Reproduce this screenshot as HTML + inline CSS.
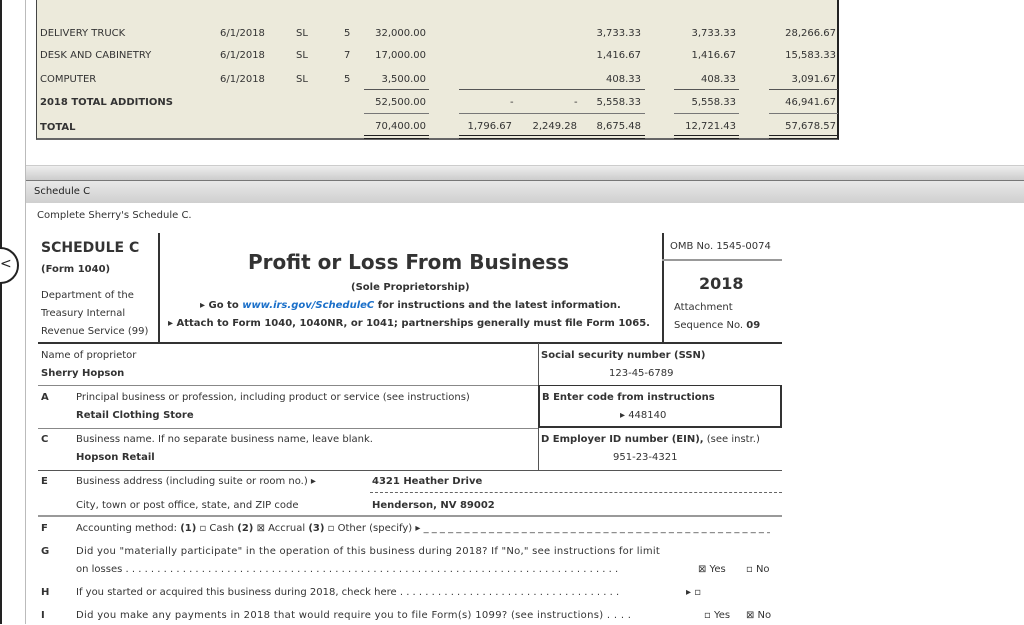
<!DOCTYPE html>
<html><head><meta charset="utf-8"><style>
*{margin:0;padding:0;box-sizing:border-box}
body{width:1024px;height:624px;overflow:hidden;background:#fff;position:relative;font-family:"DejaVu Sans",Verdana,sans-serif;color:#333;font-size:10px}
.a{position:absolute;white-space:nowrap}
.r{text-align:right}
.b{font-weight:bold}
.hl{position:absolute;background:#333;height:1px}
.vl{position:absolute;background:#333;width:1px}
.c{overflow:hidden}
</style></head><body>
<div class="a" style="left:0;top:0;width:2px;height:624px;background:#222"></div>
<div class="a" style="left:25px;top:0;width:1px;height:624px;background:#bbb"></div>
<div class="a" style="left:36px;top:0;width:803px;height:140px;background:#ECEADB;border:1px solid #444;border-top:none;border-right:2px solid #222;border-bottom:2px solid #666"></div>
<div style="position:absolute;left:0;top:2px;width:1024px;height:140px">
<div class="a" style="left:40px;top:26px">DELIVERY TRUCK</div>
<div class="a" style="left:40px;top:48px">DESK AND CABINETRY</div>
<div class="a" style="left:40px;top:72px">COMPUTER</div>
<div class="a b" style="left:40px;top:95px">2018 TOTAL ADDITIONS</div>
<div class="a b" style="left:40px;top:120px">TOTAL</div>
<div class="a" style="left:220px;top:26px">6/1/2018</div><div class="a" style="left:296px;top:26px">SL</div><div class="a" style="left:344px;top:26px">5</div>
<div class="a" style="left:220px;top:48px">6/1/2018</div><div class="a" style="left:296px;top:48px">SL</div><div class="a" style="left:344px;top:48px">7</div>
<div class="a" style="left:220px;top:72px">6/1/2018</div><div class="a" style="left:296px;top:72px">SL</div><div class="a" style="left:344px;top:72px">5</div>
<div class="a r" style="left:340px;width:86px;top:26px">32,000.00</div>
<div class="a r" style="left:340px;width:86px;top:48px">17,000.00</div>
<div class="a r" style="left:340px;width:86px;top:72px">3,500.00</div>
<div class="a r" style="left:340px;width:86px;top:95px">52,500.00</div>
<div class="a r" style="left:340px;width:86px;top:119px">70,400.00</div>
<div class="a r" style="left:440px;width:72px;top:119px">1,796.67</div>
<div class="a" style="left:510px;top:95px">-</div>
<div class="a" style="left:574px;top:95px">-</div>
<div class="a r" style="left:500px;width:77px;top:119px">2,249.28</div>
<div class="a r" style="left:560px;width:81px;top:26px">3,733.33</div>
<div class="a r" style="left:560px;width:81px;top:48px">1,416.67</div>
<div class="a r" style="left:560px;width:81px;top:72px">408.33</div>
<div class="a r" style="left:560px;width:81px;top:95px">5,558.33</div>
<div class="a r" style="left:560px;width:81px;top:119px">8,675.48</div>
<div class="a r" style="left:650px;width:86px;top:26px">3,733.33</div>
<div class="a r" style="left:650px;width:86px;top:48px">1,416.67</div>
<div class="a r" style="left:650px;width:86px;top:72px">408.33</div>
<div class="a r" style="left:650px;width:86px;top:95px">5,558.33</div>
<div class="a r" style="left:650px;width:86px;top:119px">12,721.43</div>
<div class="a r" style="left:740px;width:96px;top:26px">28,266.67</div>
<div class="a r" style="left:740px;width:96px;top:48px">15,583.33</div>
<div class="a r" style="left:740px;width:96px;top:72px">3,091.67</div>
<div class="a r" style="left:740px;width:96px;top:95px">46,941.67</div>
<div class="a r" style="left:740px;width:96px;top:119px">57,678.57</div>
</div>
<div class="hl" style="left:364px;width:65px;top:89px;background:#555"></div>
<div class="hl" style="left:459px;width:186px;top:89px;background:#555"></div>
<div class="hl" style="left:674px;width:65px;top:89px;background:#555"></div>
<div class="hl" style="left:769px;width:69px;top:89px;background:#555"></div>
<div class="hl" style="left:364px;width:65px;top:113px;background:#777"></div>
<div class="hl" style="left:459px;width:186px;top:113px;background:#777"></div>
<div class="hl" style="left:674px;width:65px;top:113px;background:#777"></div>
<div class="hl" style="left:769px;width:69px;top:113px;background:#777"></div>
<div class="a" style="left:364px;width:65px;top:135px;height:4px;border-top:1px solid #222;border-bottom:1px solid #222"></div>
<div class="a" style="left:459px;width:186px;top:135px;height:4px;border-top:1px solid #222;border-bottom:1px solid #222"></div>
<div class="a" style="left:674px;width:65px;top:135px;height:4px;border-top:1px solid #222;border-bottom:1px solid #222"></div>
<div class="a" style="left:769px;width:69px;top:135px;height:4px;border-top:1px solid #222;border-bottom:1px solid #222"></div>
<div class="a" style="left:26px;top:165px;width:998px;height:16px;background:linear-gradient(#eee,#ccc);border-top:1px solid #ccc;border-bottom:1px solid #777"></div>
<div class="a" style="left:26px;top:181px;width:998px;height:22px;background:linear-gradient(#e8e8e8,#cfcfcf)"></div>
<div class="a" style="left:34px;top:186px;color:#222">Schedule C</div>
<div class="a" style="left:37px;top:210px;color:#333">Complete Sherry's Schedule C.</div>
<div class="a" style="left:-18px;top:247px;width:37px;height:37px;border:2px solid #222;border-radius:50%;background:#fff"></div>
<div class="a" style="left:0px;top:256px;font-size:14px;color:#222">&lt;</div>
<div class="vl" style="left:158px;top:233px;height:110px;width:2px"></div>
<div class="vl" style="left:662px;top:233px;height:110px;width:2px"></div>
<div class="hl" style="left:662px;width:120px;top:259px;height:2px;background:#999"></div>
<div class="hl" style="left:38px;width:744px;top:342px;height:2px"></div>
<div class="a b" style="left:41px;top:240px;font-size:14px;color:#333">SCHEDULE C</div>
<div class="a b" style="left:41px;top:264px">(Form 1040)</div>
<div class="a" style="left:41px;top:287px;line-height:18px">Department of the<br>Treasury Internal<br>Revenue Service (99)</div>
<div class="a b" style="left:248px;top:250px;font-size:20px;color:#333">Profit or Loss From Business</div>
<div class="a b" style="left:351px;top:282px">(Sole Proprietorship)</div>
<div class="a b" style="left:200px;top:300px">▸ Go to <span style="color:#1a6fc9;font-style:italic">www.irs.gov/ScheduleC</span> for instructions and the latest information.</div>
<div class="a b" style="left:168px;top:318px">▸ Attach to Form 1040, 1040NR, or 1041; partnerships generally must file Form 1065.</div>
<div class="a" style="left:670px;top:241px">OMB No. 1545-0074</div>
<div class="a b" style="left:699px;top:274px;font-size:16px">2018</div>
<div class="a" style="left:674px;top:299px;line-height:18px">Attachment<br>Sequence No. <b>09</b></div>
<div style="position:absolute;left:0;top:1px;width:1024px;height:624px">
<div class="a" style="left:41px;top:349px">Name of proprietor</div>
<div class="a b" style="left:41px;top:367px">Sherry Hopson</div>
<div class="a b" style="left:541px;top:349px">Social security number (SSN)</div>
<div class="a" style="left:609px;top:367px">123-45-6789</div>
<div class="a b" style="left:41px;top:391px">A</div>
<div class="a" style="left:76px;top:391px">Principal business or profession, including product or service (see instructions)</div>
<div class="a b" style="left:76px;top:409px">Retail Clothing Store</div>
<div class="a b" style="left:542px;top:391px">B Enter code from instructions</div>
<div class="a" style="left:620px;top:409px">▸ 448140</div>
<div class="a b" style="left:41px;top:433px">C</div>
<div class="a" style="left:76px;top:433px">Business name. If no separate business name, leave blank.</div>
<div class="a b" style="left:76px;top:451px">Hopson Retail</div>
<div class="a" style="left:541px;top:433px"><b>D Employer ID number (EIN),</b> (see instr.)</div>
<div class="a" style="left:613px;top:451px">951-23-4321</div>
<div class="a b" style="left:41px;top:475px">E</div>
<div class="a" style="left:76px;top:475px">Business address (including suite or room no.) ▸</div>
<div class="a b" style="left:372px;top:475px">4321 Heather Drive</div>
<div class="a" style="left:76px;top:499px">City, town or post office, state, and ZIP code</div>
<div class="a b" style="left:372px;top:499px">Henderson, NV 89002</div>
<div class="a b" style="left:41px;top:522px">F</div>
<div class="a c" style="left:76px;top:522px;width:694px">Accounting method: <b>(1)</b> ▫ Cash <b>(2)</b> ⊠ Accrual <b>(3)</b> ▫ Other (specify) ▸ _ _ _ _ _ _ _ _ _ _ _ _ _ _ _ _ _ _ _ _ _ _ _ _ _ _ _ _ _ _ _ _ _ _ _ _ _ _ _ _ _ _ _ _</div>
<div class="a b" style="left:41px;top:545px">G</div>
<div class="a" style="left:76px;top:545px;letter-spacing:0.25px">Did you "materially participate" in the operation of this business during 2018? If "No," see instructions for limit</div>
<div class="a c" style="left:76px;top:563px;width:544px">on losses . . . . . . . . . . . . . . . . . . . . . . . . . . . . . . . . . . . . . . . . . . . . . . . . . . . . . . . . . . . . . . . . . . . . . . . . . . . . . . . . . . . . . . . . . . . . .</div>
<div class="a" style="left:698px;top:563px">⊠ Yes</div><div class="a" style="left:746px;top:563px">▫ No</div>
<div class="a b" style="left:41px;top:586px">H</div>
<div class="a c" style="left:76px;top:586px;width:544px">If you started or acquired this business during 2018, check here . . . . . . . . . . . . . . . . . . . . . . . . . . . . . . . . . . . . . . . . . . . .</div>
<div class="a" style="left:686px;top:586px">▸ ▫</div>
<div class="a b" style="left:41px;top:609px">I</div>
<div class="a" style="left:76px;top:609px;letter-spacing:0.3px">Did you make any payments in 2018 that would require you to file Form(s) 1099? (see instructions) . . . .</div>
<div class="a" style="left:704px;top:609px">▫ Yes</div><div class="a" style="left:746px;top:609px">⊠ No</div>
</div>
<div class="vl" style="left:538px;top:343px;height:128px;background:#555"></div>
<div class="hl" style="left:38px;width:500px;top:385px;background:#888"></div>
<div class="a" style="left:538px;top:385px;width:244px;height:43px;border:2px solid #333;border-top:1px solid #333"></div>
<div class="hl" style="left:38px;width:500px;top:428px;background:#888"></div>
<div class="hl" style="left:38px;width:744px;top:470px;background:#555"></div>
<div class="a" style="left:370px;top:492px;width:412px;border-top:1px dashed #666"></div>
<div class="hl" style="left:38px;width:744px;top:515px;height:2px;background:#999"></div>
</body></html>
